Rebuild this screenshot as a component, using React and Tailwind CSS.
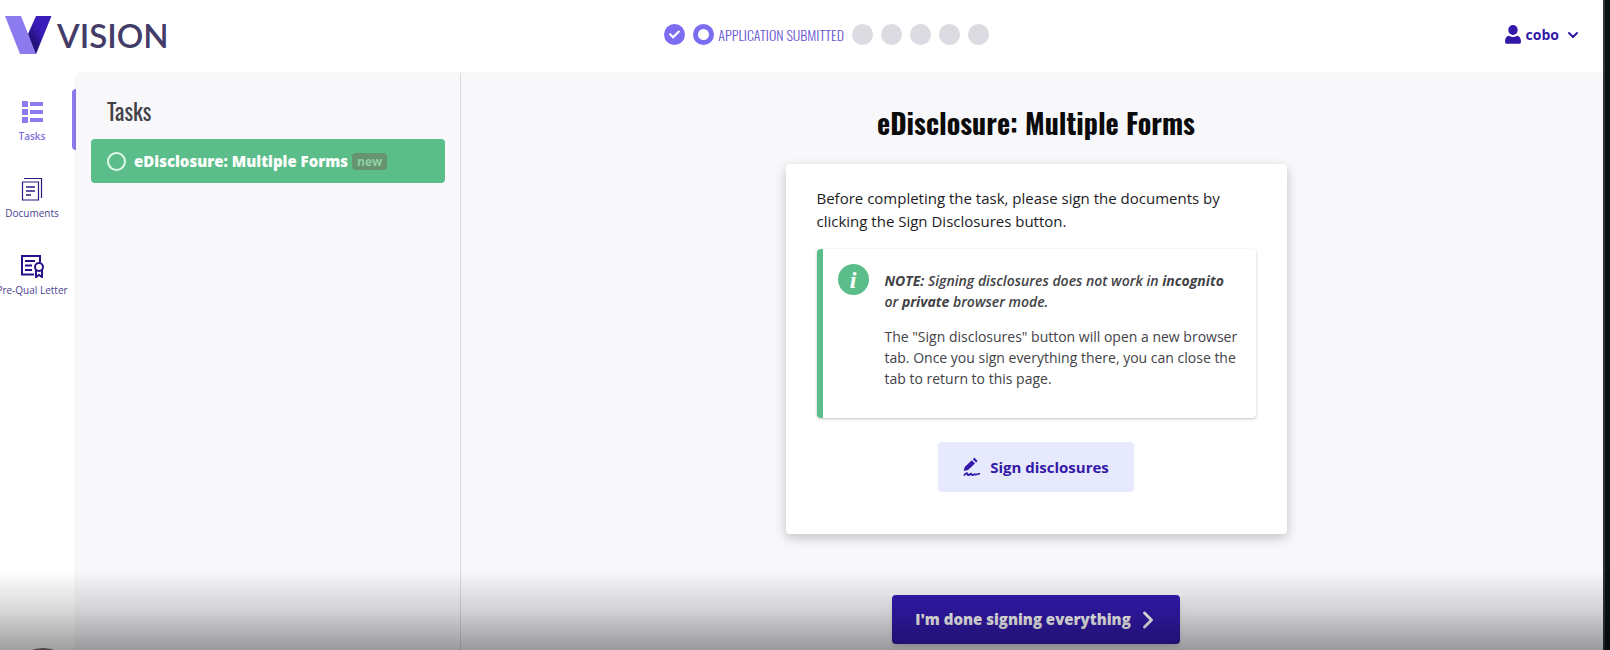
import React from "react";
import { FaCheck } from "react-icons/fa";
import { ChevronDown, ChevronRight } from "lucide-react";

const Logo = () => (
  <a href="#" className="flex items-center gap-1" aria-label="Vision">
    <svg width="48" height="40" viewBox="0 0 48 40">
      <defs>
        <linearGradient id="fold" x1="0.1" y1="0.9" x2="0.55" y2="0.4">
          <stop offset="0" stopColor="#180a5c" />
          <stop offset="1" stopColor="#3a1db8" />
        </linearGradient>
      </defs>
      <path d="M31 1H46.500L31 39H29L23 19Z" fill="url(#fold)" />
      <path d="M0 1H16L31 39H15Z" fill="#8b7bee" />
    </svg>
    <span className="font-['Lato',sans-serif] text-[33px] leading-10 font-semibold text-[#443c68]">
      VISION
    </span>
  </a>
);

const Steps = () => (
  <ol className="mr-5 flex items-center gap-2">
    <li className="flex size-[21px] items-center justify-center rounded-full bg-[#7b6cf0]">
      <FaCheck className="size-[11px] text-white" />
    </li>
    <li className="flex items-center gap-1">
      <span className="size-[21px] rounded-full border-5 border-[#7b6cf0]" />
      <span className="font-['Oswald',sans-serif] text-sm leading-5 font-light text-[#6656d2]">
        APPLICATION SUBMITTED
      </span>
    </li>
    {[3, 4, 5, 6, 7].map((step) => (
      <li key={step} className="size-[21px] rounded-full bg-[#dcdbe1]" />
    ))}
  </ol>
);

const UserIcon = () => (
  <svg width="16" height="19" viewBox="0 0 16 19" fill="#3419a8">
    <ellipse cx="8" cy="5" rx="4.700" ry="5" />
    <path d="M0 16.500C0 13 1.500 11 4 10.700C6.500 12.300 9.500 12.300 12 10.700C14.500 11 16 13 16 16.500C16 18 15.500 18.800 14 18.800H2C.5 18.800 0 18 0 16.500Z" />
  </svg>
);

const TasksIcon = () => (
  <svg width="24" height="24" viewBox="0 0 24 24" fill="#8b7bee">
    <path d="M2 1H8V7H2ZM2 9H8V15H2ZM2 17H8V23H2Z" />
    <path d="M10 2H23V6H10ZM10 10H23V14H10ZM10 18H23V22H10Z" />
  </svg>
);

const DocumentsIcon = () => (
  <svg width="24" height="24" viewBox="0 0 24 24" fill="none" stroke="#2b1a80">
    <path d="M4 1.5H21.5V21" strokeWidth="1.2" />
    <path d="M2.5 5H18.5V23H2.5Z" strokeWidth="1.2" />
    <path d="M6 10H15M6 14H15M6 18H11" strokeWidth="1.3" />
  </svg>
);

const LetterIcon = () => (
  <svg width="24" height="24" viewBox="0 0 24 24" fill="none" stroke="#2a0f8a">
    <path d="M14 20.5H2V2H20V8" strokeWidth="2" />
    <path d="M5 7H15M5 11.5H12M5 16H12" strokeWidth="2" />
    <circle cx="19" cy="13" r="4" strokeWidth="2" />
    <path d="M16 16V23L19 21L22 23V16" strokeWidth="2" />
  </svg>
);

const SignIcon = () => (
  <svg width="18" height="20" viewBox="0 0 18 20" fill="#3419a8">
    <path d="M.7 14L1.7 10L8.8 3.200L12 6.500L5 13Z" />
    <path d="M9.800 2.300L11.500.7L14.600 4L13 5.600Z" />
    <path
      d="M1 18.500C2.500 16 4.500 15.500 4.500 17C4.500 18.500 6 18.500 7.500 16.800C8.500 16 8.500 18.800 10 18C11.500 16.500 12 18 13.500 17.500L17 16.500"
      fill="none"
      stroke="#3419a8"
      strokeWidth="1.8"
    />
  </svg>
);

const NavItem = ({ icon, label, active }) => (
  <a
    href="#"
    className={`flex h-[61px] w-full ${
      active ? "text-[#7f6fe0]" : "text-[#4b3f8f]"
    }`}
  >
    <span className="flex w-16 flex-col items-center gap-1 pt-[11px]">
      {icon}
      <span
        className={`text-[10px] leading-4 whitespace-nowrap ${
          active ? "font-semibold" : ""
        }`}
      >
        {label}
      </span>
    </span>
    <span
      className={`ml-2 w-1 shrink-0 rounded-l-sm ${active ? "bg-[#8b7bee]" : ""}`}
    />
  </a>
);

const App = () => {
  return (
    <div className="flex min-h-screen flex-col overflow-hidden border-r-5 border-[#0b1113] bg-white font-['Open_Sans',sans-serif]">
      <div className="flex flex-1 flex-col border-r-2 border-[#2f383d]">
        <header className="flex h-[73px] items-center justify-between pr-[22px] pb-1 pl-[5px]">
          <Logo />
          <Steps />
          <button className="flex items-center text-[#3419a8]">
            <UserIcon />
            <span className="ml-[5px] text-sm font-bold">cobo</span>
            <ChevronDown className="ml-[6px] size-4" strokeWidth={3} />
          </button>
        </header>

        <div className="flex flex-1">
          <nav className="flex w-19 shrink-0 flex-col gap-4 pt-4">
            <NavItem active label="Tasks" icon={<TasksIcon />} />
            <NavItem label="Documents" icon={<DocumentsIcon />} />
            <NavItem label="Pre-Qual Letter" icon={<LetterIcon />} />
          </nav>

          <div className="flex flex-1 rounded-tl-md bg-[#f8f8fb] shadow-[0_0_2px_rgba(0,0,0,0.15)]">
            {/* Task list */}
            <aside className="w-[385px] shrink-0 border-r border-[#d9d9de] px-[15px] pt-[22px]">
              <h2 className="px-4 font-['Oswald',sans-serif] text-[23px] leading-8 text-[#424247]">
                Tasks
              </h2>
              <button className="mt-3 flex h-11 w-full items-center rounded-sm bg-[#5bbd89] px-4 text-white">
                <span className="size-[19px] rounded-full border-2 border-[#e3f8ec]" />
                <span className="ml-2 text-[15px] font-extrabold">
                  eDisclosure: Multiple Forms
                </span>
                <span className="ml-1 rounded-sm bg-[#65946f] px-[5px] text-xs leading-[17px] font-bold text-[#8fd0a8]">
                  new
                </span>
              </button>
            </aside>

            {/* Selected task */}
            <main className="flex flex-1 flex-col items-center pt-8 pl-2">
              <h1 className="font-['Oswald',sans-serif] text-[28px] leading-9 font-bold text-[#0b0b0c]">
                eDisclosure: Multiple Forms
              </h1>

              <section className="mt-[23px] flex w-full max-w-[501px] flex-col items-center rounded-sm bg-white px-[31px] pt-[23px] pb-[42px] shadow-[0_4px_12px_rgba(0,0,0,0.22)]">
                <p className="w-full text-[15px] leading-[23px] text-[#1c1c1f]">
                  Before completing the task, please sign the documents by
                  clicking the Sign Disclosures button.
                </p>
                <div className="mt-4 flex w-full rounded-sm border-l-6 border-[#5bbd89] pt-[15px] pr-4 pb-[29px] pl-[15px] shadow-[0_1px_3px_rgba(0,0,0,0.25)]">
                  <span className="flex size-[31px] shrink-0 items-center justify-center rounded-full bg-[#5bbd89]">
                    <span className="font-['Liberation_Serif',serif] text-2xl leading-none font-bold text-white italic">
                      i
                    </span>
                  </span>
                  <div className="ml-4 flex flex-col gap-[14px] pt-[6px] text-sm leading-[21px] font-medium text-[#424247]">
                    <p className="font-semibold italic">
                      <b className="font-bold">NOTE:</b> Signing disclosures
                      does not work in <b className="font-bold">incognito</b>{" "}
                      or <b className="font-bold">private</b> browser mode.
                    </p>
                    <p>
                      The "Sign disclosures" button will open a new browser
                      tab. Once you sign everything there, you can close the
                      tab to return to this page.
                    </p>
                  </div>
                </div>
                <button className="mt-6 flex h-[50px] items-center rounded-sm bg-[#e7e9fd] px-[25px] text-[15px] font-bold text-[#3419a8]">
                  <SignIcon />
                  <span className="ml-[9px]">Sign disclosures</span>
                </button>
              </section>

              <button className="mt-[61px] mb-[6px] flex h-[49px] items-center rounded-sm bg-[#341bb0] pr-[18px] pl-[23px] text-[15px] font-extrabold text-white shadow-md">
                I'm done signing everything
                <ChevronRight className="ml-[3px] size-7" strokeWidth={2.5} />
              </button>
            </main>
          </div>
        </div>
      </div>

      <div className="pointer-events-none fixed inset-x-0 bottom-0 h-20 bg-linear-to-b from-black/0 via-black/15 to-black/38" />
      <div className="fixed -bottom-[66px] left-[9px] size-[68px] rounded-full bg-[#4a4446]" />
    </div>
  );
};

export default App;
